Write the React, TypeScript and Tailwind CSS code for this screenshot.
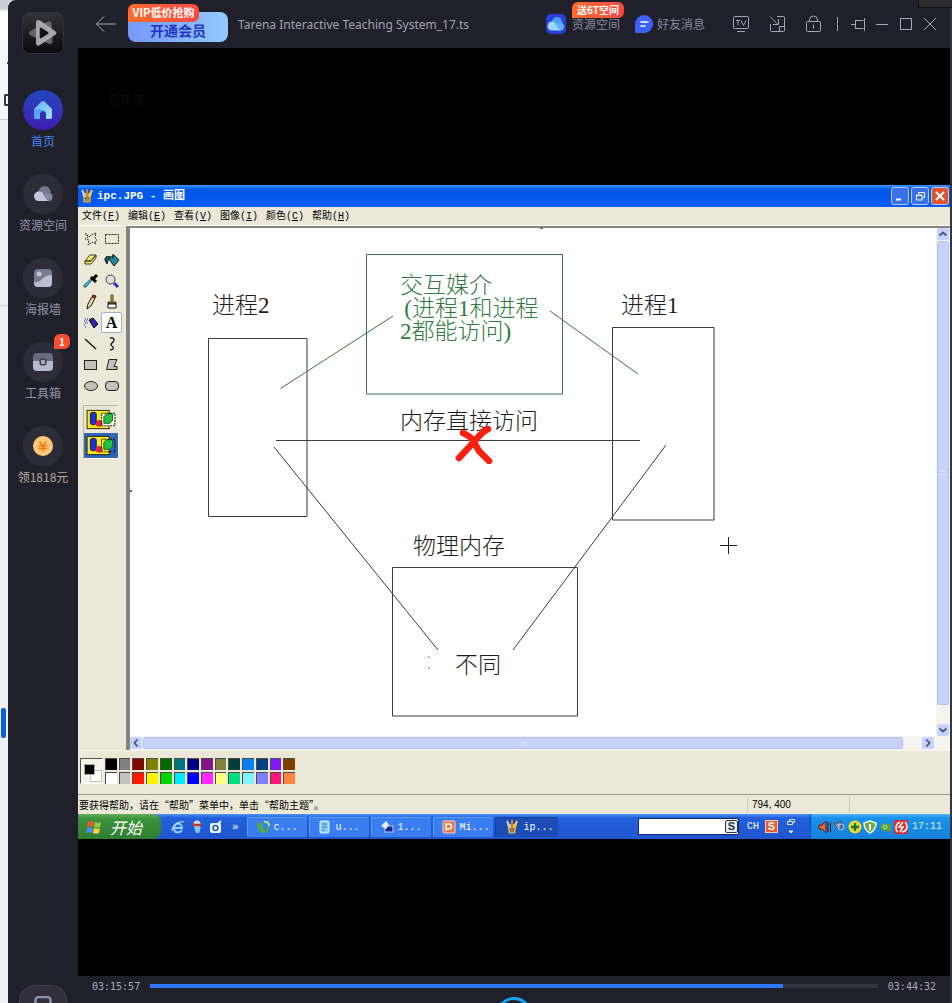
import React from "react";

const CJK = "font-['Noto_Sans_CJK_SC','Noto_Sans',sans-serif]";
const SONG = "font-['Liberation_Mono','Noto_Sans_CJK_SC',monospace]";

/* ---------- Player sidebar ---------- */

const HomeIcon = () => (
  <svg viewBox="0 0 20 20" className="size-5">
    <defs>
      <linearGradient id="home" x1="0" y1="0" x2="1" y2="1">
        <stop offset="0" stopColor="#5db4ff" />
        <stop offset="1" stopColor="#a4e2ff" />
      </linearGradient>
    </defs>
    <path d="M1 9 8.600 1.600a2 2 0 0 1 2.800 0L19 9v8a2 2 0 0 1-2 2h-4v-5a3 3 0 0 0-6 0v5H3a2 2 0 0 1-2-2z" fill="url(#home)" />
    <path d="M1 9.500c5-2 10-.5 12 4.500a3 3 0 0 0-6 0v5H3a2 2 0 0 1-2-2z" fill="#4a94ee" opacity=".7" />
  </svg>
);

const CloudIcon = () => (
  <svg viewBox="0 0 20 20" className="size-5">
    <circle cx="11.500" cy="8" r="6" fill="#73788c" />
    <circle cx="15.500" cy="13" r="4" fill="#83889c" />
    <path d="M6 7.500a5 5 0 0 1 5 4c1 2 2.500 5 5 5.500H5.500A4.700 4.700 0 0 1 6 7.500z" fill="#c3c8d8" />
  </svg>
);

const PosterIcon = () => (
  <svg viewBox="0 0 20 20" className="size-5">
    <rect x="1" y="1" width="18" height="18" rx="4" fill="#777c90" />
    <path d="M1 14c4 1 6-1 8-3s5-4 10-4v8a4 4 0 0 1-4 4H5a4 4 0 0 1-4-4z" fill="#b9bfd0" />
    <circle cx="6" cy="6" r="2.500" fill="#c3c8d8" />
  </svg>
);

const ToolboxIcon = () => (
  <svg viewBox="0 0 20 20" className="size-5">
    <path d="M0 9V5a4 4 0 0 1 4-4h12a4 4 0 0 1 4 4v4z" fill="#676c80" />
    <path d="M0 9h20v6a4 4 0 0 1-4 4H4a4 4 0 0 1-4-4z" fill="#b4bacb" />
    <rect x="7.200" y="7.200" width="5.600" height="5.600" rx="1.500" fill="#a5abbd" stroke="#3b3f50" strokeWidth="1.600" />
  </svg>
);

const CoinIcon = () => (
  <svg viewBox="0 0 20 20" className="size-5">
    <circle cx="10" cy="10" r="10" fill="#ffc877" />
    <path d="M6.500 5.500 10 10l3.500-4.500M5.500 10h9M5.500 12.500h9M10 10v5.500" stroke="#f57a16" strokeWidth="1.500" fill="none" />
  </svg>
);

const navItems = [
  { label: "首页", icon: <HomeIcon />, circle: "bg-linear-to-b from-[#2146bd] to-[#3b1cb0]", text: "text-[#4383f5]" },
  { label: "资源空间", icon: <CloudIcon />, circle: "bg-[#2d2d39]", text: "text-[#9094a6]" },
  { label: "海报墙", icon: <PosterIcon />, circle: "bg-[#2d2d39]", text: "text-[#9094a6]" },
  { label: "工具箱", icon: <ToolboxIcon />, circle: "bg-[#2d2d39]", text: "text-[#9094a6]", badge: "1" },
  { label: "领1818元", icon: <CoinIcon />, circle: "bg-[#2d2d39]", text: "text-[#b5ab9d]" },
];

function Sidebar() {
  return (
    <aside className="flex w-[70px] shrink-0 flex-col items-center pt-3">
      <div className="flex size-[42px] shrink-0 items-center justify-center rounded-lg border border-[#30303a] bg-linear-to-b from-[#33333a] to-[#0b0b0e]">
        <svg viewBox="0 0 30 30" className="size-[30px]">
          <path d="M20 4c2-.5 3 0 3 2l1 17c0 3-2 3-4 2L3 17c-2-1-2-3 0-4z" fill="#65656a" stroke="#65656a" strokeLinejoin="round" />
          <path fillRule="evenodd" d="M8 5c0-3 2-4 5-2l14 10c2 1 2 3 0 4L12 27c-2 1-4 1-4-2zM12 10.500v9c0 1 1 1 2 .5l6-4c1-.5 1-1.500 0-2l-6-4c-1-.5-2-.5-2 .5z" fill="#a7a7aa" />
          <path d="M12.500 10.500v9l7-4.500z" fill="#111115" stroke="#111115" strokeWidth="1.500" strokeLinejoin="round" />
        </svg>
      </div>
      <nav className="mt-9 flex flex-col items-center gap-[25px]">
        {navItems.map((n) => (
          <a key={n.label} href="#" className="flex flex-col items-center gap-[3px]">
            <span className={`relative flex size-10 items-center justify-center rounded-full ${n.circle}`}>
              {n.icon}
              {n.badge && (
                <span className="absolute -top-2 left-[31px] flex h-[15px] w-4 items-center justify-center rounded-md rounded-bl-none bg-[#fb4c30] text-[10px] font-bold text-white">
                  {n.badge}
                </span>
              )}
            </span>
            <span className={`text-xs leading-4 whitespace-nowrap ${n.text}`}>{n.label}</span>
          </a>
        ))}
      </nav>
      <button aria-label="媒体库" className="mt-auto flex h-[18px] w-12 shrink-0 justify-center overflow-hidden rounded-t-2xl border border-b-0 border-[#43434f] bg-[#302f3b] pt-2.5">
        <svg viewBox="0 0 18 12" className="h-3 w-[18px] shrink-0">
          <path d="M1.500 12V4a3 3 0 0 1 3-3h9a3 3 0 0 1 3 3v8" stroke="#8b93a8" strokeWidth="2.500" fill="none" />
        </svg>
      </button>
    </aside>
  );
}

/* ---------- Player header ---------- */

const line = { fill: "none", stroke: "#a3a6b6", strokeWidth: 1 } as const;

const headerTools = [
  { label: "投屏", icon: <><path d="M5.500 4.500h13a1 1 0 0 1 1 1v10a1 1 0 0 1-1 1h-13a1 1 0 0 1-1-1v-10a1 1 0 0 1 1-1zM8 19.500h8" /><path d="M7 8.500h4M9 8.500v5M12 8.500l2.500 5 2.500-5" /></> },
  { label: "小窗", icon: <path d="M5.500 12v6.500a1 1 0 0 0 1 1h12a1 1 0 0 0 1-1v-13a1 1 0 0 0-1-1H12M5 4.500l8 8M13.500 7v5.500H8M14.500 19.500v-5h5" /> },
  { label: "锁定", icon: <><rect x="5.500" y="9.500" width="14" height="10" rx="1" /><path d="M8.500 9.500V8a4 4 0 0 1 8 0v1.500M12.500 12.500v4" /></> },
];

const windowTools = [
  { label: "置顶", icon: <path d="M5 12.500h4.500M9.500 8v9M9.500 8.500h8M9.500 16.500h8M18.500 6v13" /> },
  { label: "最小化", icon: <path d="M6 12.500h12" /> },
  { label: "最大化", icon: <rect x="6.500" y="6.500" width="11" height="11" /> },
  { label: "关闭", icon: <path d="m6 6 12 12M18 6 6 18" /> },
];

function ToolButton({ label, icon }: { label: string; icon: React.ReactNode }) {
  return (
    <button aria-label={label} className="size-6">
      <svg viewBox="0 0 24 24" className="size-6" {...line}>{icon}</svg>
    </button>
  );
}

function Header() {
  return (
    <header className="flex h-12 shrink-0 items-center pr-2 pl-[18px]">
      <button aria-label="返回" className="w-5">
        <svg viewBox="0 0 20 20" className="size-5" {...line}>
          <path d="M0 10h20M8 2.500 .5 10 8 17.500" />
        </svg>
      </button>
      <button className="relative mt-1.5 ml-3 flex h-[30px] w-[100px] items-center justify-center rounded-lg bg-linear-to-r from-[#7598fb] to-[#93c9ff] pt-1.5 text-sm font-bold text-[#2535c0]">
        开通会员
        <span className="absolute -top-2 left-0 flex h-[18px] w-[71px] items-center justify-center rounded-md rounded-bl-none bg-linear-to-r from-[#ff6b28] to-[#fb4743] text-[11px] font-bold whitespace-nowrap text-white">
          VIP低价抢购
        </span>
      </button>
      <h1 className="ml-2.5 truncate pt-0.5 font-['Noto_Sans',sans-serif] text-xs text-[#a2a3ae]">
        Tarena Interactive Teaching System_17.ts
      </h1>
      <div className="ml-auto flex shrink-0 items-center">
        <a href="#" className="relative mr-[15px] flex items-center gap-1.5 text-xs text-[#878a9a]">
          <svg viewBox="0 0 20 20" className="size-5">
            <rect width="20" height="20" rx="5" fill="#293fd8" />
            <circle cx="11" cy="8" r="5" fill="#4b9dff" />
            <circle cx="14" cy="12.500" r="4" fill="#5fb0ff" />
            <path d="M6 7.500a4 4 0 0 1 4 3c1 2 2.500 5.500 5 6H6a4.500 4.500 0 0 1 0-9z" fill="#9ad6ff" />
          </svg>
          资源空间
          <span className="absolute -top-3 left-[26px] flex h-4 w-[52px] items-center justify-center rounded-md rounded-bl-none bg-linear-to-r from-[#ff6b28] to-[#fb4743] text-[10px] font-bold whitespace-nowrap text-white">
            送6T空间
          </span>
        </a>
        <a href="#" className="mr-6 flex items-center gap-1 text-xs text-[#878a9a]">
          <svg viewBox="0 0 18 18" className="size-[18px]">
            <path d="M9 0a9 9 0 0 1 0 18H1.500A1.500 1.500 0 0 1 0 16.500V9a9 9 0 0 1 9-9z" fill="#3c62fb" />
            <path d="M5.500 7h8M5.500 11h5" stroke="#fff" strokeWidth="1.700" />
          </svg>
          好友消息
        </a>
        <div className="flex gap-3">
          {headerTools.map((t) => <ToolButton key={t.label} {...t} />)}
        </div>
        <span className="mr-2 ml-3 h-3.5 w-px bg-[#9a9dac]" />
        {windowTools.map((t) => <ToolButton key={t.label} {...t} />)}
      </div>
    </header>
  );
}

/* ---------- Paint window ---------- */

const PaintIcon = () => (
  <svg viewBox="0 0 12 14" className="h-3.5 w-3 shrink-0">
    <path d="M1.500 4h9l-1 9.500h-7z" fill="#c9a95b" />
    <path d="m1 1 3 7" stroke="#b6dcff" strokeWidth="2" />
    <path d="M6 0v8" stroke="#f3752a" strokeWidth="2" />
    <path d="m11 1-3 7" stroke="#f4d34b" strokeWidth="2" />
    <path d="M3 9h6M4 11h4" stroke="#6b5420" />
  </svg>
);

const menus = [
  ["文件", "F"], ["编辑", "E"], ["查看", "V"], ["图像", "I"], ["颜色", "C"], ["帮助", "H"],
];

const tools: { name: string; icon: React.ReactNode }[] = [
  { name: "任意形状的裁剪", icon: <path d="m2 2 4 4 2-2 5-2-1 5 2 2-2 1 1 3-4-2-4 3 1-5-4-1 3-2z" fill="none" stroke="#333" strokeDasharray="2 1" /> },
  { name: "选定", icon: <rect x="1.500" y="3.500" width="13" height="9" fill="none" stroke="#222" strokeDasharray="2 1" /> },
  { name: "橡皮", icon: <path d="m2 9 5-6h6l-5 6zM8 9l5-6v3l-5 6H2V9z" fill="#f6ed6c" stroke="#3b3722" strokeLinejoin="round" /> },
  { name: "用颜色填充", icon: <><path d="m5 7 5-4 5 5-5 6z" fill="#1c8f9c" stroke="#111" /><path d="M9 7V2M1 8c0-4 3-4 6-3L4 8l-1 4z" fill="#125b67" stroke="#111" /></> },
  { name: "取色", icon: <><path d="m9 7-6 7H1v-2l7-6z" fill="#33c7d0" stroke="#17656b" /><path d="m8 4 5 5M10 6l4-4" stroke="#000" strokeWidth="3" /></> },
  { name: "放大镜", icon: <><path d="m10 10 4 4" stroke="#2a2ccb" strokeWidth="3" /><circle cx="6.500" cy="6.500" r="4.500" fill="#d5e0e4" stroke="#444" /></> },
  { name: "铅笔", icon: <><path d="m5 10 4-7 3 1-4 8-4 3z" fill="#f5e39c" stroke="#111" /><path d="m9 3 3 1 1-2-3-1z" fill="#b1352a" stroke="#5b1511" /></> },
  { name: "刷子", icon: <><path d="M7 1h2v6H7z" fill="#b7a71c" stroke="#5b530b" /><path d="M4 8h8v2H4z" fill="#8c8016" stroke="#333" /><path d="M4 10h8v4H4z" fill="#fff" stroke="#111" /></> },
  { name: "喷枪", icon: <><path d="m6 5 4-2 5 6-4 4z" fill="#2b27a6" stroke="#111" /><path d="M2 4h5M1 6h4M2 8h3M1 10h2M2 12h1" stroke="#5551d4" strokeWidth="1.500" strokeDasharray="1 1" /></> },
  { name: "文字", icon: null },
  { name: "直线", icon: <path d="m2 3 11 10" stroke="#111" strokeWidth="1.300" /> },
  { name: "曲线", icon: <path d="M6 2c4-1 5 2 3 4s-3 3-1 4 2 4-2 4" fill="none" stroke="#111" strokeWidth="1.300" /> },
  { name: "矩形", icon: <rect x="1.500" y="3.500" width="12" height="9" fill="#c3c1b8" stroke="#222" /> },
  { name: "多边形", icon: <path d="M5 2.500h8l-3 7h3v3H2.500z" fill="#c3c1b8" stroke="#222" /> },
  { name: "椭圆", icon: <ellipse cx="8" cy="8" rx="6.500" ry="4.500" fill="#c3c1b8" stroke="#222" /> },
  { name: "圆角矩形", icon: <rect x="1.500" y="3.500" width="13" height="9" rx="3.500" fill="#c3c1b8" stroke="#222" /> },
];

const Shapes = ({ opaque }: { opaque: boolean }) => (
  <svg viewBox="0 0 34 26" className="h-[25px] w-[34px]">
    <rect x="2.500" y="3.500" width="23" height="19" fill="#fbe91c" stroke="#222" />
    {opaque && <path d="M17 7h14v13H17z" fill="#f8f6e8" />}
    <path d="M6 7c0-2 6-2 6 0v10c0 2-6 2-6 0z" fill="#1e33d6" stroke="#0a1466" />
    <circle cx="15" cy="17" r="3.500" fill="#e5262f" />
    <path d="m20 10 3-3h6v7l-3 3h-6z" fill="#27bd3f" stroke="#0d6b1d" />
    <path d="M17.500 6.500h14v13h-14z" fill="none" stroke="#111" strokeDasharray="2 1" />
  </svg>
);

function ToolPanel() {
  return (
    <div className="flex w-12 shrink-0 flex-col items-center pt-0.5 pr-0.5">
      <div className="grid grid-cols-2">
        {tools.map((t) => (
          <button
            key={t.name}
            aria-label={t.name}
            className={
              t.icon
                ? "flex size-[21px] items-center justify-center"
                : "flex size-[21px] items-center justify-center rounded-xs border border-[#9fb2c8] bg-white font-['Liberation_Serif',serif] text-base font-bold text-black"
            }
          >
            {t.icon ? <svg viewBox="0 0 16 16" className="size-4">{t.icon}</svg> : "A"}
          </button>
        ))}
      </div>
      <div className="mt-[9px] flex flex-col border border-[#b9b6a5] border-r-white border-b-white">
        <button aria-label="不透明" className="h-[27px]"><Shapes opaque /></button>
        <button aria-label="透明" className="h-[25px] bg-[#3165b5]"><Shapes opaque={false} /></button>
      </div>
    </div>
  );
}

const canvasText = "absolute text-[23px] leading-[23px] whitespace-nowrap font-light font-['Liberation_Serif','Noto_Sans_CJK_SC',serif]";

function Canvas() {
  return (
    <div className="relative h-[508px] min-w-0 flex-1 overflow-hidden bg-white text-[#1d1d1d]">
      <svg viewBox="130 228 806 508" className="absolute top-0 left-0 h-[508px] w-[806px]" fill="none" stroke="#3d3d3d">
        <path d="M208.500 338.500h98.500v178h-98.500zM612.500 327.500h101.500v192.500h-101.500zM392.500 567.500h185v148.500h-185z" />
        <path d="M276 440.500h364M274 447l164 203M666 445 513 650" />
        <path d="M366.500 254.500h196v139.500h-196zM550 311l88 63M280.500 388.500 393 316" stroke="#3e7049" />
        <path d="M728.500 537v17M720 545.500h17" stroke="#222" />
        <path d="M428 656l2 2M430 667l-2 2" stroke="#777" />
        <path d="M540 228h3M130 491h2" stroke="#4a63b5" strokeWidth="2" />
      </svg>
      <p className={`${canvasText} top-[66px] left-[82px]`}>进程2</p>
      <p className={`${canvasText} top-[66px] left-[491px]`}>进程1</p>
      <p className={`${canvasText} top-[46px] left-[270px] text-[#2f7a3c]`}>
        <span className="block">交互媒介</span>
        <span className="flex"><span className="w-3 text-right">(</span>进程1和进程</span>
        <span className="block">2都能访问)</span>
      </p>
      <p className={`${canvasText} top-[182px] left-[270px]`}>内存直接访问</p>
      <p className={`${canvasText} top-[307px] left-[283px]`}>物理内存</p>
      <p className={`${canvasText} top-[426px] left-[325px]`}>不同</p>
      <svg viewBox="0 0 38 38" className="absolute top-[198px] left-[325px] size-[38px]">
        <path d="M8 7c4 2 8 3 11 9l5 9 10 10M33 3c-2 1-5 3-8 6l-8 9L4 32" fill="none" stroke="#f9200f" strokeWidth="6.500" strokeLinecap="round" strokeLinejoin="round" />
      </svg>
    </div>
  );
}

const Arrow = ({ d }: { d: string }) => (
  <span className="flex size-3 shrink-0 items-center justify-center rounded-xs bg-[#c5d3fb]">
    <svg viewBox="0 0 10 10" className="size-2.5" fill="none" stroke="#42557f" strokeWidth="1.800"><path d={d} /></svg>
  </span>
);

const palette = [
  "bg-black", "bg-[#808080]", "bg-[#7c0a02]", "bg-[#808000]", "bg-[#006a00]", "bg-[#007480]", "bg-[#000084]",
  "bg-[#801480]", "bg-[#80803f]", "bg-[#003f3c]", "bg-[#0080ff]", "bg-[#004080]", "bg-[#8018ff]", "bg-[#804000]",
  "bg-white", "bg-[#c0c0c0]", "bg-[#ff1800]", "bg-[#fff000]", "bg-[#00d600]", "bg-[#00e8ff]", "bg-[#0000ff]",
  "bg-[#ff28ff]", "bg-[#ffff80]", "bg-[#00e080]", "bg-[#80f4ff]", "bg-[#8080ff]", "bg-[#ff1478]", "bg-[#ff8440]",
];

const captionButton = "flex size-[18px] items-center justify-center rounded-[3px] border border-[#b4caf8] text-white";

function PaintWindow() {
  return (
    <section className="flex flex-col bg-[#ebe8d8] text-black">
      <div className="flex h-[22px] items-center bg-linear-to-b from-[#3d95ff] via-[#0058e6] via-20% to-[#0a5cf5] pr-px pl-[3px]">
        <PaintIcon />
        <h2 className={`${SONG} ml-1 text-[11px] font-bold whitespace-pre text-white`}>ipc.JPG - 画图</h2>
        <div className="ml-auto flex gap-0.5">
          <button aria-label="最小化窗口" className={`${captionButton} bg-[#3a6fe8]`}>
            <svg viewBox="0 0 12 12" className="size-3"><path d="M2 9.500h5" stroke="#fff" strokeWidth="2" /></svg>
          </button>
          <button aria-label="还原窗口" className={`${captionButton} bg-[#3a6fe8]`}>
            <svg viewBox="0 0 12 12" className="size-3" fill="none" stroke="#fff"><path d="M4.500 4V2.500h6v5H9M2.500 5h5.500v5H2.500zM2 5.500h6" /></svg>
          </button>
          <button aria-label="关闭窗口" className={`${captionButton} bg-[#e0532f]`}>
            <svg viewBox="0 0 12 12" className="size-3"><path d="m2 2 8 8M10 2l-8 8" stroke="#fff" strokeWidth="2" /></svg>
          </button>
        </div>
      </div>

      <div className={`${SONG} flex h-[18px] items-center pl-1 text-[10px]`}>
        {menus.map(([name, key]) => (
          <button key={name} className="w-[46px] text-left whitespace-nowrap">
            {name}({<u>{key}</u>})
          </button>
        ))}
      </div>

      <div className="flex border-t border-white">
        <ToolPanel />
        <div className="flex min-w-0 flex-1 flex-col border-t-2 border-l-4 border-[#85837b]">
          <div className="flex">
            <Canvas />
            <div className="flex w-3.5 shrink-0 flex-col items-center bg-[#f5f4f0]">
              <Arrow d="m1.500 6.500 3.500-3 3.500 3" />
              <div className="my-px flex w-3 flex-1 flex-col rounded-xs border border-[#b2c3f0] bg-[#c6d3fc]">
                <span className="m-auto h-1 w-1.5 border-y border-[#e9efff]" />
              </div>
              <span className="h-[18px]" />
              <Arrow d="m1.500 3.500 3.500 3 3.500-3" />
            </div>
          </div>
          <div className="flex h-3.5 items-center bg-[#f5f4f0] pr-4">
            <Arrow d="m6.500 1.500-3 3.500 3 3.500" />
            <div className="mx-px flex h-3 flex-1 rounded-xs border border-[#b2c3f0] bg-[#c6d3fc]">
              <span className="m-auto h-1 w-1 border-x border-[#e9efff]" />
            </div>
            <span className="w-[18px]" />
            <Arrow d="m3.500 1.500 3 3.500-3 3.500" />
          </div>
        </div>
      </div>

      <div className="flex h-11 items-center gap-0.5 border-t border-[#f6f4ea] pb-1 pl-0.5">
        <div className="relative h-[26px] w-[23px] border border-[#55534a] border-r-white border-b-white bg-[#f6f4ea]">
          <span className="absolute top-[11px] left-[9px] size-3 border border-[#c5c2b2] bg-white" />
          <span className="absolute top-[5px] left-[3px] size-[11px] border border-[#9bb09b] bg-black" />
        </div>
        <div className="grid w-[190px] grid-cols-14 gap-0.5">
          {palette.map((c, i) => (
            <button key={c} aria-label={`颜色 ${i + 1}`} className={`h-3 border-t border-l border-[#4d4b44] ${c}`} />
          ))}
        </div>
      </div>

      <div className="flex h-5 items-center border-t border-[#9b988a] text-[10px] leading-4">
        <p lang="zh-CN" className={`${CJK} w-[670px] shrink truncate border-r border-[#cfccbd] pl-px`}>
          要获得帮助，请在“帮助”菜单中，单击“帮助主题”。
        </p>
        <p className="w-[102px] shrink-0 border-r border-[#cfccbd] pl-1 font-['Liberation_Sans','Noto_Sans_CJK_SC',sans-serif]">794, 400</p>
      </div>

      <Taskbar />
    </section>
  );
}

const tasks = [
  { label: "c...", icon: <><path d="M1 4c3-3 6-1 6 3s3 5 6-3c1 5-1 8-4 9-4 1-8-3-8-9z" fill="#4ea84a" /><path d="M8 2c3-1 5 1 5 4" stroke="#b4e46b" fill="none" strokeWidth="2" /></> },
  { label: "u...", icon: <><rect x="2" y="1" width="9" height="12" rx="1" fill="#8fd0ee" stroke="#dcf4ff" /><path d="M4 4h5M4 7h5M4 10h3" stroke="#317ea8" /></> },
  { label: "1...", icon: <><rect x="5" y="6" width="8" height="6" fill="#16278f" stroke="#b8ccf3" /><path d="m1 6 5-5 3 4-3 4z" fill="#e6efe9" /></> },
  { label: "Mi...", icon: <><rect x="1" y="1" width="12" height="12" rx="1" fill="#e7764c" stroke="#fbd7c6" /><path d="M4 11V4h3a2 2 0 0 1 0 5H5" stroke="#fff" fill="none" strokeWidth="1.500" /></> },
];

function Taskbar() {
  return (
    <div className={`${SONG} flex h-[25px] items-center bg-linear-to-b from-[#4f95f5] via-[#2260dc] via-15% to-[#1f55cd] text-[10px] text-white`}>
      <button className="flex h-full w-[83px] shrink-0 items-center gap-2 rounded-r-lg bg-linear-to-b from-[#62ad5f] via-[#3b923a] via-20% to-[#2f7d31] pl-2 font-['Noto_Sans_CJK_SC',sans-serif] text-base italic">
        <svg viewBox="0 0 16 16" className="size-4">
          <path d="M2 3c2-1 4-1 6 0L7 8C5 7 3 7 1 8z" fill="#f0592a" />
          <path d="M9 3c2 1 4 1 6 0l-1 5c-2 1-4 1-6 0z" fill="#8ccf3f" />
          <path d="M1 9c2-1 4-1 6 0l-1 5c-2-1-4-1-6 0z" fill="#4f8df0" />
          <path d="M8 9c2 1 4 1 6 0l-1 5c-2 1-4 1-6 0z" fill="#fbd23c" />
        </svg>
        开始
      </button>
      <div className="flex shrink-0 items-center gap-[5px] pl-2.5">
        <svg viewBox="0 0 14 14" className="size-3.5" fill="none">
          <path d="M3 8h8c0-6-8-6-8 0s6 5 8 2" stroke="#8fd0ff" strokeWidth="2" />
          <path d="M1 11C0 6 9 0 13 2" stroke="#d8efff" />
        </svg>
        <svg viewBox="0 0 14 14" className="size-3.5">
          <circle cx="7" cy="4" r="3.500" fill="#e9d7cd" /><path d="M3 5h8" stroke="#c92f28" strokeWidth="2.500" />
          <path d="M4 7h7l-2 6H6z" fill="#7fc7e8" />
        </svg>
        <svg viewBox="0 0 14 14" className="size-3.5">
          <rect x="1" y="3" width="11" height="10" rx="2" fill="#e9f2fb" />
          <circle cx="6.500" cy="8" r="2.500" fill="none" stroke="#2b60a8" strokeWidth="1.500" /><path d="m8 5 4-4" stroke="#e8f0f8" strokeWidth="2" />
        </svg>
        <span className="ml-1 self-start text-[11px] leading-4">»</span>
      </div>
      <div className="ml-2 flex shrink-0 gap-0.5">
        {tasks.map((t) => (
          <button key={t.label} className="flex h-5 w-[60px] items-center gap-1 rounded-xs border-t border-l border-[#5f9ef8] bg-[#3a7df0] pl-2">
            <svg viewBox="0 0 14 14" className="size-3.5">{t.icon}</svg>
            {t.label}
          </button>
        ))}
        <button className="flex h-5 w-[63px] items-center gap-1.5 rounded-xs border-t border-l border-[#123f9f] bg-[#1c4db5] pl-2.5">
          <PaintIcon />
          ip...
        </button>
      </div>
      <div className="ml-auto flex h-[17px] w-[101px] min-w-0 shrink items-center border border-[#0c2c78] bg-white">
        <input aria-label="搜索" className="h-full min-w-0 flex-1 bg-white text-black outline-none" />
        <button aria-label="搜索选项" className="size-[13px] rounded-xs border border-[#2b3440] bg-[#e8eef2] font-['Liberation_Sans',sans-serif] text-[11px] leading-[11px] font-bold text-[#26303a]">S</button>
      </div>
      <span className="ml-2">CH</span>
      <span className="ml-1.5 flex size-[13px] items-center justify-center border border-[#f7c9b4] bg-[#e85a2c] font-['Liberation_Sans',sans-serif] text-[11px] font-bold">S</span>
      <svg viewBox="0 0 10 18" className="ml-2 h-[18px] w-2.5" fill="none" stroke="#dce9ff">
        <path d="M3.500 3.500v-2h5v3H7M1.500 3.500h5v3h-5z" /><path d="M3 13h4l-2 2z" fill="#dce9ff" />
      </svg>
      <div className="ml-3.5 flex h-full w-[140px] shrink-0 items-center border-l border-[#0d4fb2] bg-linear-to-b from-[#4fb4fa] via-[#1a92ea] via-15% to-[#1580dc] pl-[7px]">
        <svg viewBox="0 0 90 14" className="h-3.5 w-[90px]">
          <path d="M1 5h3l4-4v12L4 9H1z" fill="#e8653c" stroke="#4f1d13" /><path d="M10 2v10M12.500 2v10" stroke="#222" />
          <path d="M16 3h4l3-2v9l-4-2z" fill="#8f98ab" stroke="#3c4966" /><circle cx="23" cy="7" r="3" fill="none" stroke="#b9c6dd" />
          <circle cx="37" cy="7" r="6.500" fill="#f0dd27" /><path d="M33 7h8M37 3v8" stroke="#1c7431" strokeWidth="2.500" />
          <path d="m52 1 6 2c0 5-2 8-6 10-4-2-6-5-6-10z" fill="#6da84a" stroke="#f1f6d8" strokeWidth="1.500" /><path d="M52 4v6" stroke="#fff" strokeWidth="2" />
          <path d="M61 7c4-5 8-4 12-3v7c-4 1-8 1-12-4z" fill="#55a03c" /><circle cx="67" cy="7" r="2" fill="none" stroke="#bfe5a7" />
          <rect x="76" y="0" width="14" height="14" rx="2" fill="#db2b2b" /><path d="M82 2c-5 2-5 8-2 10M84 12c6-1 6-7 3-10M85 2l-4 5h4l-3 5" stroke="#fff" fill="none" strokeWidth="1.500" />
        </svg>
        <time className="ml-1 text-[#dcefff]">17:11</time>
      </div>
    </div>
  );
}

/* ---------- Player controls ---------- */

function Controls() {
  return (
    <footer className="flex h-[27px] shrink-0 flex-col overflow-hidden">
      <div className="flex h-5 shrink-0 items-center pr-3.5 pl-3.5 font-['DejaVu_Sans_Mono',monospace] text-[10px] text-[#a8a9b5]">
        <time>03:15:57</time>
        <input
          type="range"
          aria-label="播放进度"
          defaultValue={87}
          className="mx-2.5 h-1 min-w-0 flex-1 appearance-none bg-[linear-gradient(to_right,#2f77fb_87%,#353542_87%)] [&::-webkit-slider-thumb]:size-0 [&::-webkit-slider-thumb]:appearance-none"
        />
        <time>03:44:32</time>
      </div>
      <button aria-label="播放" className="mx-auto mt-px size-9 shrink-0 rounded-full border-3 border-[#18a4f4]" />
    </footer>
  );
}

export default function App() {
  return (
    <div className={`${CJK} flex h-screen overflow-hidden bg-[#d4d8dd]`}>
      <div className="flex w-2 shrink-0 flex-col bg-[#eff0f2]">
        <div className="h-10 bg-linear-to-b from-[#c9ced5] from-20% to-white to-30%" />
        <div className="flex h-20 flex-col items-end border-b border-[#cdd0d4] bg-[#f5f6f8]">
          <span className="mt-[22px] h-0.5 w-px bg-[#444]" />
          <span className="mt-[30px] h-3 w-1 rounded-l-xs border-2 border-r-0 border-[#3b3b3f]" />
        </div>
        <div className="h-[186px] border-b border-[#c9d3de]" />
        <div className="mt-[402px] ml-px h-[30px] w-[5px] rounded-xs bg-[#0a62d8]" />
      </div>
      <div className="relative flex min-w-0 flex-1 rounded-tl-lg border-r-2 border-[#34343e] bg-[#20202b]">
        <Sidebar />
        <main className="flex min-w-0 flex-1 flex-col">
          <Header />
          <div className="relative flex min-h-0 flex-1 flex-col justify-center bg-black">
            <span className="absolute top-11 left-[30px] text-xs leading-4 text-[#0d0d0d]">已暂停</span>
            <PaintWindow />
          </div>
          <Controls />
        </main>
        <span className="absolute top-0 -right-0.5 h-2 w-[34px] border-b border-l border-[#111] bg-[#2c2c2e]" />
      </div>
    </div>
  );
}
